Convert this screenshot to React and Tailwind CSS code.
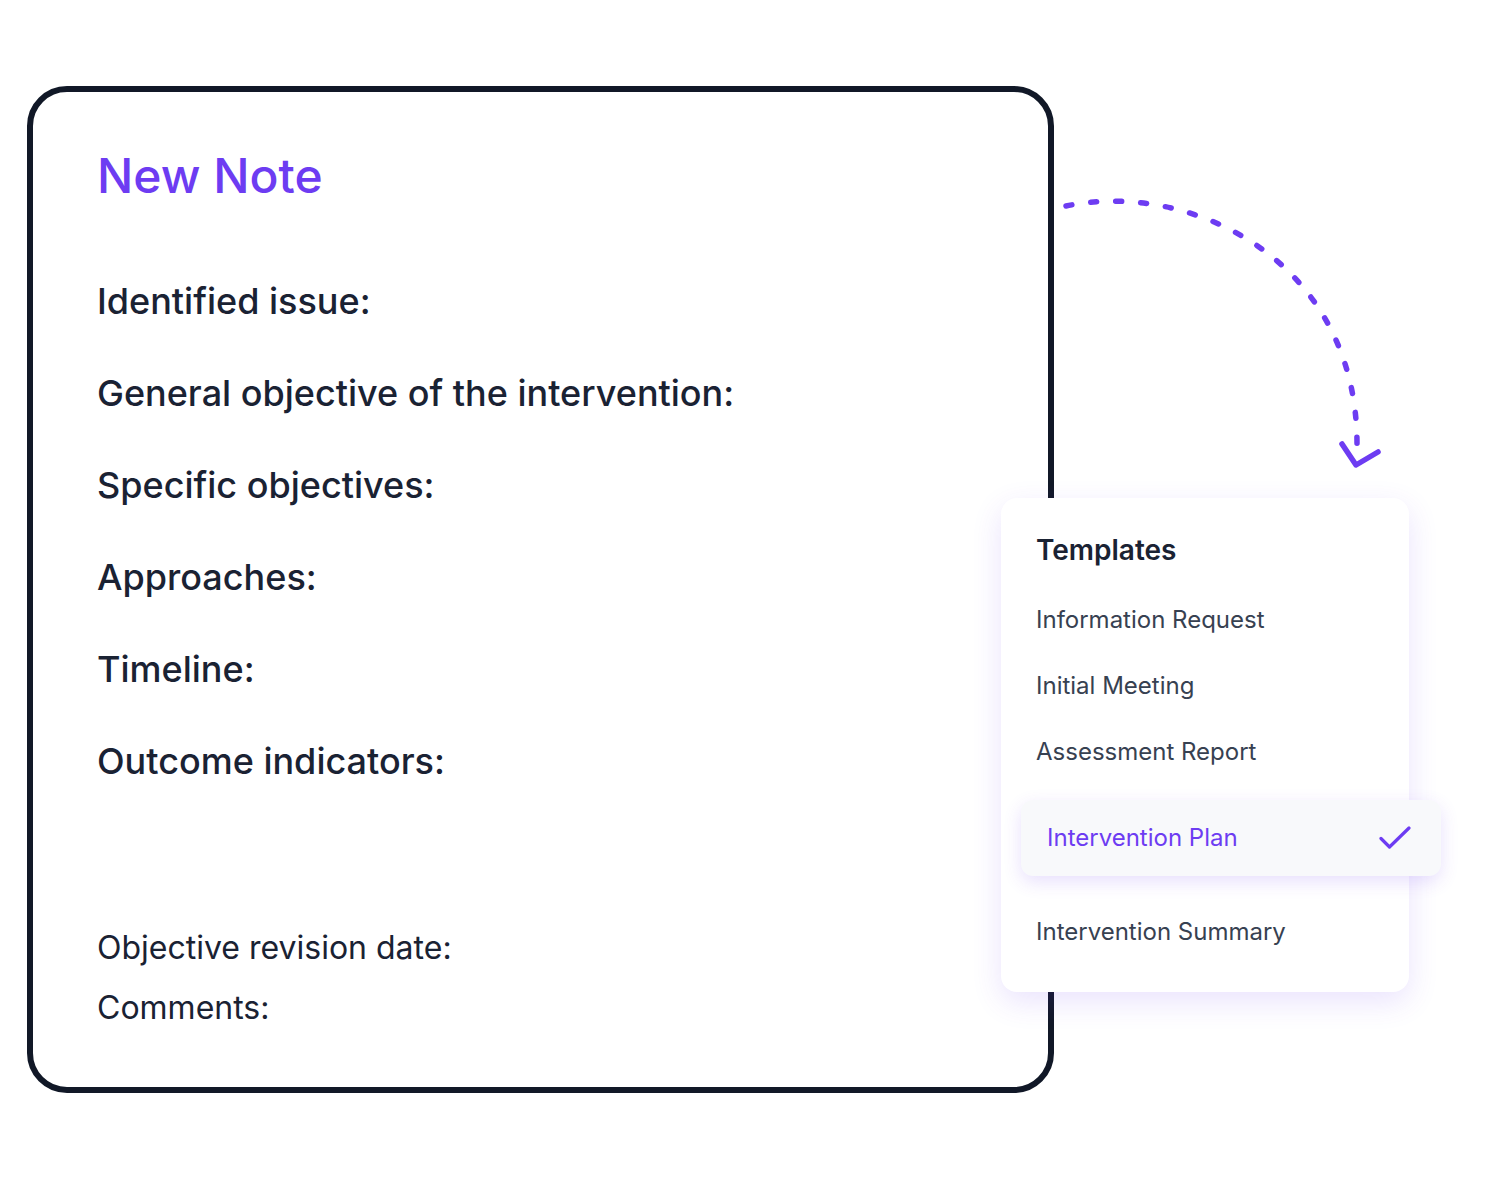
const font = { fontFamily: 'Inter, "Noto Sans", sans-serif' };

const sections = [
  'Identified issue:',
  'General objective of the intervention:',
  'Specific objectives:',
  'Approaches:',
  'Timeline:',
  'Outcome indicators:',
];

const templates = ['Information Request', 'Initial Meeting', 'Assessment Report'];

function CheckMark() {
  return (
    <svg width="32" height="24" viewBox="0 0 32 24" fill="none">
      <path d="M2 12.5 L10.5 21 L30 2" stroke="#6d3cf2" strokeWidth="3.2" strokeLinecap="round" strokeLinejoin="round" />
    </svg>
  );
}

function Arrow() {
  return (
    <svg className="absolute inset-0 pointer-events-none" width="1501" height="1200" viewBox="0 0 1501 1200" fill="none">
      <path
        d="M1066 206 C1190 180 1358 260 1357 446"
        stroke="#6d3cf2"
        strokeWidth="5.5"
        strokeLinecap="round"
        strokeDasharray="6 19"
      />
      <path d="M1342 444 L1356 465 L1378 452" stroke="#6d3cf2" strokeWidth="5.5" strokeLinecap="round" strokeLinejoin="round" />
    </svg>
  );
}

export default function App() {
  return (
    <div className="relative w-[1501px] h-[1200px] bg-white overflow-hidden" style={font}>
      <div className="ml-[27px] pt-[86px]">
        <div className="w-[1027px] h-[1007px] border-[6px] border-[#111827] rounded-[40px] pl-[64px] pt-[55px]">
          <h1 className="text-[48px] leading-[58px] font-medium text-[#6d3cf2]">New Note</h1>
          <div className="mt-[74px] flex flex-col gap-[48px]">
            {sections.map((s) => (
              <p key={s} className="text-[36px] leading-[44px] font-[450] text-[#1a2233]">{s}</p>
            ))}
          </div>
          <div className="mt-[145px] flex flex-col gap-[20px]">
            <p className="text-[32px] leading-[40px] text-[#1a2233]">Objective revision date:</p>
            <p className="text-[32px] leading-[40px] text-[#1a2233]">Comments:</p>
          </div>
        </div>
      </div>

      <Arrow />

      <div className="absolute left-[1001px] top-[498px] w-[408px] h-[494px] bg-white rounded-[16px] shadow-[0_10px_30px_rgba(109,60,242,0.14)] pl-[35px] pt-[36px]">
        <h2 className="text-[28px] leading-[32px] font-semibold text-[#1a2233]">Templates</h2>
        <div className="mt-[38px] flex flex-col gap-[34px]">
          {templates.map((t) => (
            <p key={t} className="text-[24px] leading-[32px] text-[#374151]">{t}</p>
          ))}
        </div>
        <div className="mt-[32px] ml-[-15px] mr-[-32px] h-[76px] rounded-[12px] bg-[#f8f9fb] shadow-[0_6px_18px_rgba(109,60,242,0.16)] flex items-center justify-between pl-[26px] pr-[30px]">
          <span className="text-[24px] leading-[32px] text-[#6d3cf2]">Intervention Plan</span>
          <CheckMark />
        </div>
        <p className="mt-[40px] text-[24px] leading-[32px] text-[#374151]">Intervention Summary</p>
      </div>
    </div>
  );
}
